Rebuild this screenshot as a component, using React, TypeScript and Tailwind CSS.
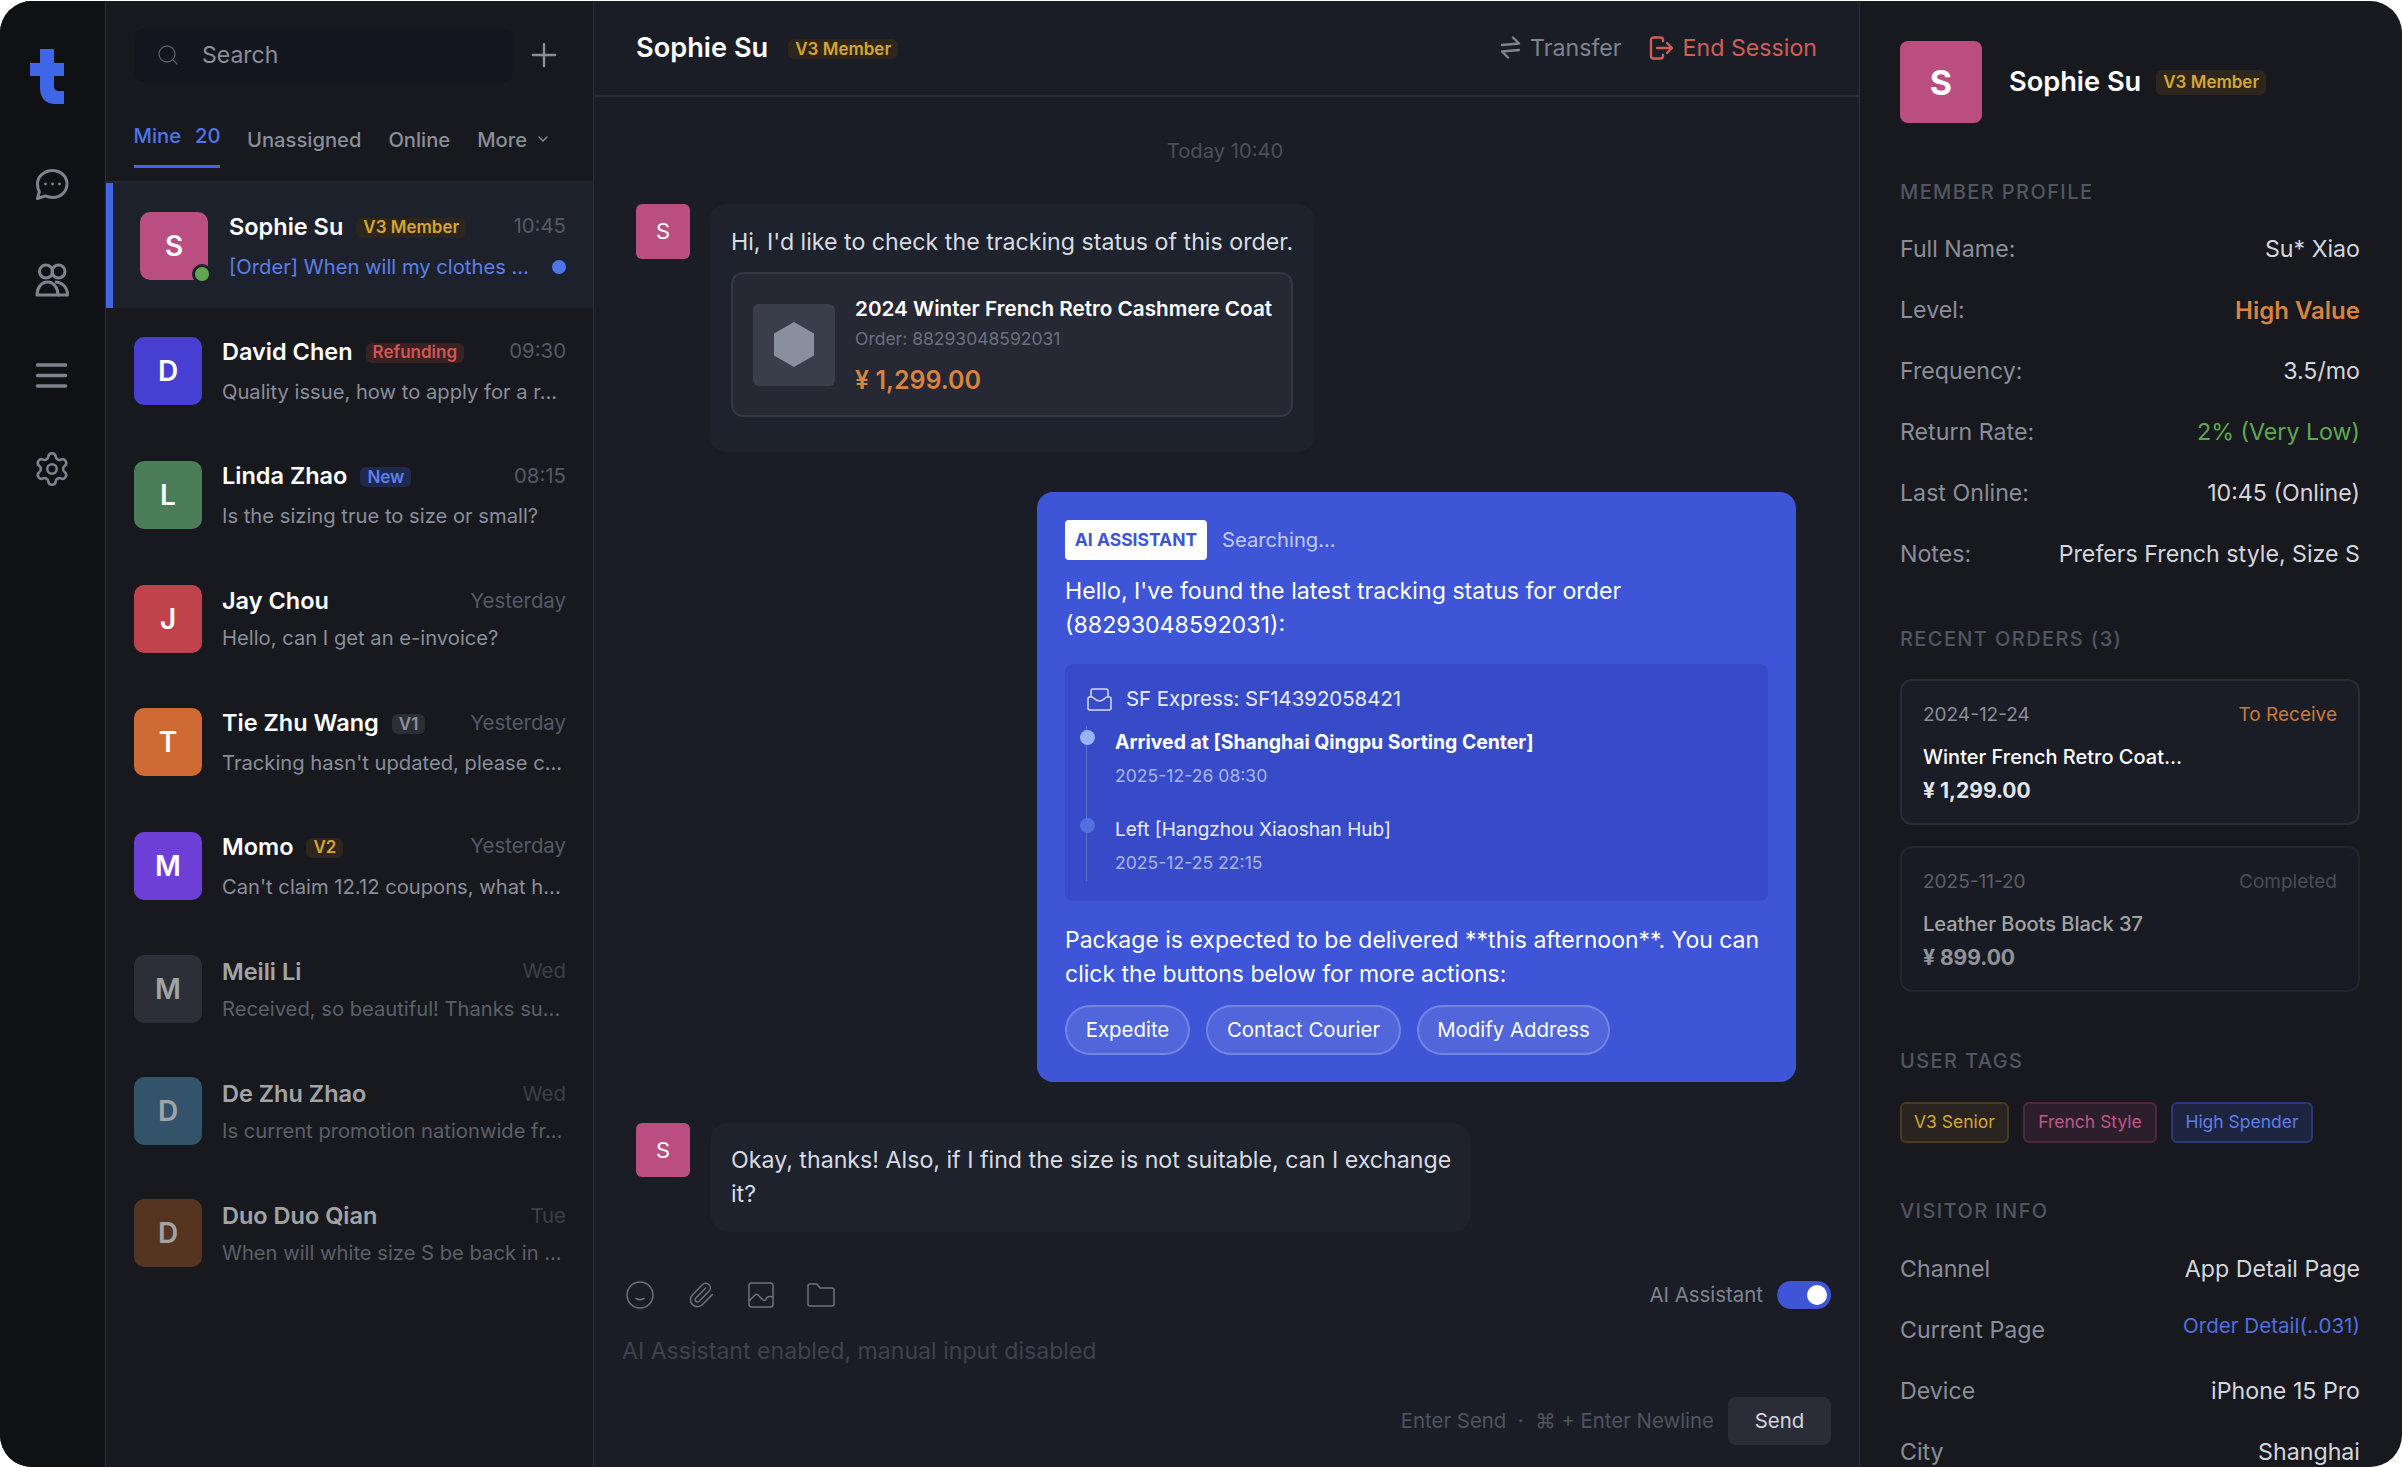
import React from "react";
import { ChevronDown, Paperclip, Plus, Search, Settings } from "lucide-react";

type Chat = {
  name: string;
  letter: string;
  color: string;
  time: string;
  preview: string;
  badge?: string;
  badgeClass?: string;
  rowClass: string;
  dim?: boolean;
};

const GOLD = "bg-[#2e261c] text-[#d6a631]";

const CHATS: Chat[] = [
  { name: "David Chen", letter: "D", color: "bg-[#473fd1]", time: "09:30", preview: "Quality issue, how to apply for a r...", badge: "Refunding", badgeClass: "bg-[#3a2124] text-[#d0584f]", rowClass: "h-[125px]" },
  { name: "Linda Zhao", letter: "L", color: "bg-[#4a7d58]", time: "08:15", preview: "Is the sizing true to size or small?", badge: "New", badgeClass: "bg-[#1e2a4d] text-[#5c7fe8]", rowClass: "h-[124px]" },
  { name: "Jay Chou", letter: "J", color: "bg-[#c0434c]", time: "Yesterday", preview: "Hello, can I get an e-invoice?", rowClass: "h-[123px]" },
  { name: "Tie Zhu Wang", letter: "T", color: "bg-[#d06a35]", time: "Yesterday", preview: "Tracking hasn't updated, please c...", badge: "V1", badgeClass: "bg-[#2c2e36] text-[#8b8f9a]", rowClass: "h-[124px]" },
  { name: "Momo", letter: "M", color: "bg-[#6c3fd6]", time: "Yesterday", preview: "Can't claim 12.12 coupons, what h...", badge: "V2", badgeClass: GOLD, rowClass: "h-[123px]" },
  { name: "Meili Li", letter: "M", color: "bg-[#3a3e49]", time: "Wed", preview: "Received, so beautiful! Thanks su...", rowClass: "h-[123px]", dim: true },
  { name: "De Zhu Zhao", letter: "D", color: "bg-[#467a9d]", time: "Wed", preview: "Is current promotion nationwide fr...", rowClass: "h-[122px]", dim: true },
  { name: "Duo Duo Qian", letter: "D", color: "bg-[#7f4623]", time: "Tue", preview: "When will white size S be back in ...", rowClass: "h-[122px]", dim: true },
];

const PROFILE = [
  { label: "Full Name:", value: "Su* Xiao", cls: "text-[#d4d6dc]" },
  { label: "Level:", value: "High Value", cls: "text-[#d8833f] font-semibold text-[24px]" },
  { label: "Frequency:", value: "3.5/mo", cls: "text-[#d4d6dc]" },
  { label: "Return Rate:", value: "2% (Very Low)", cls: "text-[#5fa84f]" },
  { label: "Last Online:", value: "10:45 (Online)", cls: "text-[#d4d6dc]" },
  { label: "Notes:", value: "Prefers French style, Size S", cls: "text-[#d4d6dc]" },
];

const VISITOR = [
  { label: "Channel", value: "App Detail Page", cls: "text-[#d4d6dc] text-[23.2px]" },
  { label: "Current Page", value: "Order Detail(..031)", cls: "text-[#4f6fe0] text-[20.6px] -mt-[8px]" },
  { label: "Device", value: "iPhone 15 Pro", cls: "text-[#d4d6dc] text-[23.2px]" },
  { label: "City", value: "Shanghai", cls: "text-[#d4d6dc] text-[23.2px]" },
];

const TAGS = [
  { text: "V3 Senior", cls: "w-[109px] border-[#4a3a1f] bg-[#2a2420] text-[#d6a631]" },
  { text: "French Style", cls: "w-[134px] border-[#53263f] bg-[#2c1f2b] text-[#c2558c]" },
  { text: "High Spender", cls: "w-[142px] border-[#263a78] bg-[#1c2440] text-[#5c7fe8]" },
];

const ACTIONS = [
  { text: "Expedite", cls: "w-[125px]" },
  { text: "Contact Courier", cls: "w-[195px]" },
  { text: "Modify Address", cls: "w-[193px]" },
];

const Logo = () => (
  <svg width="34" height="55" viewBox="0 0 34 55" fill="#3f66e6">
    <path d="M10 0h14v14h10v13H24v10c0 4 2 5 5 5h5v13h-9C15 55 10 48 10 39V27H0V14h10Z" />
  </svg>
);

const ChatIcon = () => (
  <svg width="34" height="31" viewBox="0 0 34 31" fill="none" stroke="#7f838e" strokeWidth="3" strokeLinejoin="round">
    <path d="M17.5 1.5c8.2 0 14.5 6 14.5 13.5s-6.3 13.500-14.500 13.500c-2.600 0-5-.6-7.200-1.600L2.500 29.500l1.800-6.800C2.900 20.600 2.500 18 2.500 15 2.500 7.500 9.300 1.500 17.500 1.500Z" />
    <circle cx="10.500" cy="15" r="1.400" fill="#7f838e" stroke="none" />
    <circle cx="17.500" cy="15" r="1.400" fill="#7f838e" stroke="none" />
    <circle cx="24.500" cy="15" r="1.400" fill="#7f838e" stroke="none" />
  </svg>
);

const UsersIcon = () => (
  <svg width="34" height="34" viewBox="0 0 34 34" fill="none" stroke="#7f838e" strokeWidth="3" strokeLinejoin="round">
    <circle cx="11" cy="8.500" r="6.500" />
    <circle cx="23.500" cy="8.500" r="6.500" />
    <path d="M2 32c0-7.500 4.500-13 10.500-13S23 24.500 23 32Z" />
    <path d="M20 19c7 0 12.500 5 12.500 13H23" />
  </svg>
);

const MenuIcon = () => (
  <svg width="31" height="25" viewBox="0 0 31 25" fill="none" stroke="#7f838e" strokeWidth="3.400" strokeLinecap="round">
    <path d="M1.500 2h28M1.500 12.500h28M1.500 23h28" />
  </svg>
);

const TransferIcon = () => (
  <svg width="21" height="23" viewBox="0 0 21 23" fill="none" stroke="#7f838e" strokeWidth="2.400" strokeLinecap="round" strokeLinejoin="round">
    <path d="M2 9l17-1.500L13 1.500" />
    <path d="M19 14L2 15.500l6 6" />
  </svg>
);

const ExitIcon = () => (
  <svg width="24" height="24" viewBox="0 0 24 24" fill="none" stroke="#cf5f55" strokeWidth="2.400" strokeLinecap="round" strokeLinejoin="round">
    <path d="M14 5V4a2.500 2.500 0 0 0-2.500-2.500h-7A2.500 2.500 0 0 0 2 4v16a2.500 2.500 0 0 0 2.500 2.500h7A2.500 2.500 0 0 0 14 20v-1" />
    <path d="M8 12h14.500M18 7l5 5-5 5" />
  </svg>
);

const SmileIcon = () => (
  <svg width="28" height="28" viewBox="0 0 28 28" fill="none" stroke="#6d717d" strokeWidth="1.500" strokeLinecap="round">
    <circle cx="14" cy="14" r="13" />
    <path d="M10 17.500c2.500 1.500 5.500 1.500 8 0" />
  </svg>
);

const ImageIcon = () => (
  <svg width="26" height="26" viewBox="0 0 26 26" fill="none" stroke="#6d717d" strokeWidth="1.500" strokeLinejoin="round">
    <rect x="1" y="1" width="24" height="24" rx="2.500" />
    <path d="M1 19l6-6c1-1 2-1 3 0l5 5c1 .8 2.500.6 3-1 .6-1.600 3-3 7-2" />
  </svg>
);

const FolderIcon = () => (
  <svg width="28" height="24" viewBox="0 0 28 24" fill="none" stroke="#6d717d" strokeWidth="1.500" strokeLinejoin="round">
    <path d="M1 3a2 2 0 0 1 2-2h7l3 4h12a2 2 0 0 1 2 2v14a2 2 0 0 1-2 2H3a2 2 0 0 1-2-2Z" />
  </svg>
);

const TrayIcon = () => (
  <svg width="25" height="23" viewBox="0 0 25 23" fill="none" stroke="#d5dcfa" strokeWidth="1.500" strokeLinejoin="round">
    <path d="M4 9V3a2 2 0 0 1 2-2h13a2 2 0 0 1 2 2v6" />
    <path d="M1 10.500c0-1 .8-1.500 1.600-1.500H5c2 0 2.500 4 7.500 4S18 9 20 9h2.400c.8 0 1.600.5 1.600 1.500V20a2 2 0 0 1-2 2H3a2 2 0 0 1-2-2Z" />
  </svg>
);

const Avatar = ({ letter, color, className }: { letter: string; color: string; className: string }) => (
  <div className={`flex items-center justify-center text-white shrink-0 ${color} ${className}`}>{letter}</div>
);

const Badge = ({ text, className }: { text: string; className: string }) => (
  <span className={`rounded-[6px] px-[7px] flex items-center text-[17px] leading-none font-semibold ${className}`}>{text}</span>
);

const Row = ({ chat }: { chat: Chat }) => (
  <div className={`flex items-center gap-[20px] pl-[28px] pr-[27px] ${chat.rowClass} ${chat.dim ? "opacity-60" : ""}`}>
    <Avatar letter={chat.letter} color={chat.color} className="w-[68px] h-[68px] rounded-[10px] text-[28px] font-semibold" />
    <div className={`flex-1 min-w-0 ${chat.dim ? "pt-[1px]" : ""}`}>
      <div className="flex items-center h-[32px]">
        <span className="text-[23.5px] font-semibold text-white leading-none">{chat.name}</span>
        {chat.badge && <Badge text={chat.badge} className={`ml-[13px] mt-[2px] h-[20px] ${chat.badgeClass}`} />}
        <span className="ml-auto text-[20.4px] text-[#555965]">{chat.time}</span>
      </div>
      <div className={`${chat.badge ? "mt-[10px]" : "mt-[7px]"} text-[20.2px] leading-[28px] text-[#8a8e99] whitespace-nowrap`}>{chat.preview}</div>
    </div>
  </div>
);

const SideTitle = ({ children, className }: { children: React.ReactNode; className?: string }) => (
  <div className={`text-[20px] leading-[24px] tracking-[1.4px] text-[#525662] font-medium ${className ?? ""}`}>{children}</div>
);

const OrderCard = ({ date, status, statusCls, title, price, dim }: { date: string; status: string; statusCls: string; title: string; price: string; dim?: boolean }) => (
  <div className={`h-[146px] rounded-[12px] border-2 border-[#2a2d38] bg-[#1a1d26] px-[21px] pt-[22px] ${dim ? "opacity-60" : ""}`}>
    <div className="flex justify-between text-[19px] leading-[24px]">
      <span className="text-[#8a8e99]">{date}</span>
      <span className={statusCls}>{status}</span>
    </div>
    <div className="mt-[16px] text-[20px] leading-[28px] font-medium text-white">{title}</div>
    <div className="mt-[6px] text-[21px] leading-[28px] font-bold text-[#e4e5e9]">{price}</div>
  </div>
);

export default function App() {
  return (
    <div className="h-[1468px] w-full bg-white pt-px pb-px overflow-hidden font-['Inter',sans-serif]">
      <div className="flex h-[1466px] rounded-[32px] overflow-hidden bg-[#17191f]">
        {/* icon rail */}
        <aside className="w-[106px] shrink-0 border-r border-[#2a2e39] bg-[#0f1115] flex flex-col items-center pt-[48px] pr-[2px]">
          <div className="mr-[10px]"><Logo /></div>
          <div className="mt-[65px]"><ChatIcon /></div>
          <div className="mt-[63px]"><UsersIcon /></div>
          <div className="mt-[66px]"><MenuIcon /></div>
          <Settings size={38} strokeWidth={1.600} className="mt-[62px] text-[#7f838e]" />
        </aside>

        {/* conversation list */}
        <section className="w-[488px] shrink-0 border-r border-[#2a2e39] flex flex-col">
          <div className="flex items-center pl-[28px] pr-[30px] pt-[27px]">
            <div className="h-[54px] w-[379px] rounded-[10px] bg-[#14161e] flex items-center pl-[22px]">
              <Search size={24} strokeWidth={1.300} className="text-[#5a5e6a]" />
              <span className="ml-[22px] text-[23px] text-[#8a8e99]">Search</span>
            </div>
            <Plus size={38} strokeWidth={1.500} className="ml-auto text-[#8a8e99]" />
          </div>
          <div className="mt-[29px] h-[72px] border-b-2 border-[#24272f] flex pl-[28px] gap-[27px]">
            <div className="h-[57px] border-b-[3px] border-[#3f66e6] w-[86px] text-[20.2px] font-medium text-[#4f75ea] flex gap-[14px] items-start pt-[10px] justify-center">
              <span>Mine</span><span>20</span>
            </div>
            <span className="pt-[11px] text-[20.2px] font-medium text-[#8a8e99] leading-[36px]">Unassigned</span>
            <span className="pt-[11px] text-[20.2px] font-medium text-[#8a8e99] leading-[36px]">Online</span>
            <span className="pt-[11px] text-[20.2px] font-medium text-[#8a8e99] leading-[36px] flex items-start gap-[8px]">
              More <ChevronDown size={16} strokeWidth={2} className="mt-[9px]" />
            </span>
          </div>
          <div className="h-[125px] flex items-center gap-[21px] border-l-[7px] border-[#3f66e6] bg-[#1d212c] pl-[27px] pr-[27px]">
            <div className="relative">
              <Avatar letter="S" color="bg-[#bb4e80]" className="w-[68px] h-[68px] rounded-[10px] text-[28px] font-semibold" />
              <span className="absolute -right-[4px] -bottom-[4px] w-[20px] h-[20px] rounded-full bg-[#5fa84f] border-[3px] border-[#1d212c]" />
            </div>
            <div className="flex-1 min-w-0">
              <div className="flex items-center h-[32px]">
                <span className="text-[23.5px] font-semibold text-white leading-none">Sophie Su</span>
                <Badge text="V3 Member" className={`ml-[13px] mt-[2px] h-[20px] ${GOLD}`} />
                <span className="ml-auto text-[20.4px] text-[#555965]">10:45</span>
              </div>
              <div className="mt-[10px] flex items-center justify-between text-[20.2px] leading-[28px] text-[#5c7fe8] whitespace-nowrap">
                <span>[Order] When will my clothes ...</span>
                <span className="w-[14px] h-[14px] rounded-full bg-[#4f75ea]" />
              </div>
            </div>
          </div>
          {CHATS.map((chat) => <Row key={chat.name} chat={chat} />)}
        </section>

        {/* active conversation */}
        <main className="flex-1 min-w-0 bg-[#1a1d26] flex flex-col">
          <header className="h-[96px] shrink-0 border-b-2 border-[#2a2d38] flex items-center pl-[42px] pr-[42px] pb-[2px]">
            <span className="text-[27.2px] font-semibold text-white mt-[2px]">Sophie Su</span>
            <Badge text="V3 Member" className={`ml-[20px] mt-[4px] h-[20px] ${GOLD}`} />
            <div className="ml-auto flex items-center text-[23.2px] pt-[2px]">
              <TransferIcon />
              <span className="ml-[9px] text-[#7f838e]">Transfer</span>
              <span className="ml-[27px]"><ExitIcon /></span>
              <span className="ml-[10px] text-[#cf5f55]">End Session</span>
            </div>
          </header>

          <div className="flex-1 min-h-0 overflow-hidden flex flex-col pl-[42px] pr-[63px] pt-[40px]">
            <div className="text-center text-[20.2px] leading-[28px] text-[#4b4f5c] pl-[18px]">Today 10:40</div>
            <div className="mt-[39px] flex gap-[20px] items-start">
              <Avatar letter="S" color="bg-[#bb4e80]" className="w-[54px] h-[55px] rounded-[6px] text-[22px]" />
              <div className="w-[604px] h-[248px] rounded-[16px] bg-[#1e222c] px-[21px] pt-[20px]">
                <div className="text-[23.2px] leading-[36px] text-[#d9dbe3] whitespace-nowrap">Hi, I'd like to check the tracking status of this order.</div>
                <div className="mt-[12px] h-[145px] rounded-[12px] border-2 border-[#343846] bg-[#262833] flex items-center pl-[20px] gap-[20px]">
                  <div className="w-[82px] h-[82px] rounded-[6px] bg-[#3a3e4b] flex items-center justify-center">
                    <svg width="40" height="45" viewBox="0 0 40 45" fill="#8a8f9d"><path d="M20 0l20 11.500v22L20 45 0 33.500v-22Z" /></svg>
                  </div>
                  <div className="pt-[2px]">
                    <div className="text-[20.7px] leading-[28px] font-semibold text-white whitespace-nowrap">2024 Winter French Retro Cashmere Coat</div>
                    <div className="mt-[3px] text-[17.5px] leading-[26px] text-[#6b7080]">Order: 88293048592031</div>
                    <div className="mt-[11px] text-[25px] leading-[34px] font-semibold text-[#d8833f]">¥ 1,299.00</div>
                  </div>
                </div>
              </div>
            </div>

            <div className="mt-[40px] self-end w-[759px] h-[590px] rounded-[16px] bg-[#3d55d6] px-[28px] pt-[28px] text-white shrink-0">
              <div className="flex items-center">
                <span className="h-[40px] w-[142px] rounded-[4px] bg-white text-[#3d55d6] text-[17.5px] font-bold flex items-center justify-center">AI ASSISTANT</span>
                <span className="ml-[15px] text-[20.2px] text-[#c4cbf2]">Searching...</span>
              </div>
              <p className="mt-[14px] text-[23.2px] leading-[34px]">Hello, I've found the latest tracking status for order (88293048592031):</p>
              <div className="relative mt-[22px] h-[237px] rounded-[8px] bg-[#374bc8] pl-[22px] pt-[20px]">
                <span className="absolute left-[21px] top-[62px] h-[155px] w-px bg-white/20" />
                <div className="flex items-center gap-[14px] text-[20.4px] leading-[30px] text-[#e8ebfc]">
                  <TrayIcon /> SF Express: SF14392058421
                </div>
                <div className="relative mt-[13px] pl-[28px] text-[19.4px] leading-[30px] font-bold">
                  <span className="absolute -left-[7px] top-[3px] w-[15px] h-[15px] rounded-full bg-[#9bb3f5]" />
                  Arrived at [Shanghai Qingpu Sorting Center]
                </div>
                <div className="mt-[5px] pl-[28px] text-[17.6px] leading-[28px] text-[#aab5ec]">2025-12-26 08:30</div>
                <div className="relative mt-[25px] pl-[28px] text-[19px] leading-[30px] text-[#e8ebfc]">
                  <span className="absolute -left-[7px] top-[3px] w-[15px] h-[15px] rounded-full bg-[#5470dd]" />
                  Left [Hangzhou Xiaoshan Hub]
                </div>
                <div className="mt-[4px] pl-[28px] text-[17.6px] leading-[28px] text-[#aab5ec]">2025-12-25 22:15</div>
              </div>
              <p className="mt-[22px] text-[23px] leading-[34px]">Package is expected to be delivered **this afternoon**. You can click the buttons below for more actions:</p>
              <div className="mt-[14px] flex gap-[16px]">
                {ACTIONS.map((a) => (
                  <span key={a.text} className={`${a.cls} h-[50px] rounded-full border-2 border-white/20 bg-white/10 flex items-center justify-center text-[20.4px]`}>{a.text}</span>
                ))}
              </div>
            </div>

            <div className="mt-[41px] flex gap-[21px] items-start shrink-0">
              <Avatar letter="S" color="bg-[#bb4e80]" className="w-[54px] h-[54px] rounded-[6px] text-[22px]" />
              <div className="w-[759px] h-[109px] rounded-[16px] bg-[#1e222c] pl-[20px] pr-[10px] pt-[20px] text-[23.2px] leading-[34px] text-[#d9dbe3]">
                Okay, thanks! Also, if I find the size is not suitable, can I exchange it?
              </div>
            </div>
          </div>

          <div className="h-[216px] shrink-0 pl-[28px] pr-[28px] pt-[30px]">
            <div className="flex items-center h-[28px]">
              <div className="flex items-center gap-[33px] pl-[4px]">
                <SmileIcon />
                <Paperclip size={28} strokeWidth={1.300} className="text-[#6d717d]" />
                <ImageIcon />
                <FolderIcon />
              </div>
              <div className="ml-auto flex items-center gap-[14px]">
                <span className="text-[20.4px] text-[#7f838e]">AI Assistant</span>
                <div className="w-[54px] h-[28px] rounded-full bg-[#3d55d6] flex items-center justify-end pr-[4px]">
                  <span className="w-[20px] h-[20px] rounded-full bg-white" />
                </div>
              </div>
            </div>
            <div className="mt-[25px] text-[23.1px] leading-[34px] text-[#3e424e]">AI Assistant enabled, manual input disabled</div>
            <div className="mt-[29px] flex items-center justify-end gap-[14px]">
              <span className="text-[20.4px] text-[#4f535f]">Enter Send&nbsp; · &nbsp;⌘ + Enter Newline</span>
              <span className="w-[103px] h-[48px] rounded-[8px] bg-[#2a2d38] text-[#d4d6dc] text-[20.4px] flex items-center justify-center">Send</span>
            </div>
          </div>
        </main>

        {/* customer profile */}
        <aside className="w-[543px] shrink-0 border-l border-[#2a2e39] pl-[40px] pr-[42px] pt-[40px] overflow-hidden">
          <div className="flex items-center">
            <Avatar letter="S" color="bg-[#bb4e80]" className="w-[82px] h-[82px] rounded-[8px] text-[34px] font-bold" />
            <span className="ml-[27px] text-[27.2px] font-semibold text-white">Sophie Su</span>
            <Badge text="V3 Member" className={`ml-[15px] h-[25px] ${GOLD}`} />
          </div>
          <SideTitle className="mt-[57px]">MEMBER PROFILE</SideTitle>
          <div className="mt-[15px] flex flex-col">
            {PROFILE.map((p) => (
              <div key={p.label} className="flex justify-between items-center h-[61px] text-[23.2px]">
                <span className="text-[#8a8e99]">{p.label}</span>
                <span className={p.cls}>{p.value}</span>
              </div>
            ))}
          </div>
          <SideTitle className="mt-[42px]">RECENT ORDERS (3)</SideTitle>
          <div className="mt-[28px] flex flex-col gap-[21px]">
            <OrderCard date="2024-12-24" status="To Receive" statusCls="text-[#c97a3a]" title="Winter French Retro Coat..." price="¥ 1,299.00" />
            <OrderCard date="2025-11-20" status="Completed" statusCls="text-[#6a6e7a]" title="Leather Boots Black 37" price="¥ 899.00" dim />
          </div>
          <SideTitle className="mt-[57px]">USER TAGS</SideTitle>
          <div className="mt-[29px] flex gap-[14px]">
            {TAGS.map((t) => (
              <span key={t.text} className={`h-[41px] rounded-[6px] border-2 flex items-center justify-center text-[17.5px] ${t.cls}`}>{t.text}</span>
            ))}
          </div>
          <SideTitle className="mt-[56px]">VISITOR INFO</SideTitle>
          <div className="mt-[16px] flex flex-col">
            {VISITOR.map((v) => (
              <div key={v.label} className="flex justify-between items-center h-[61px]">
                <span className="text-[23.2px] text-[#8a8e99]">{v.label}</span>
                <span className={v.cls}>{v.value}</span>
              </div>
            ))}
          </div>
        </aside>
      </div>
    </div>
  );
}
